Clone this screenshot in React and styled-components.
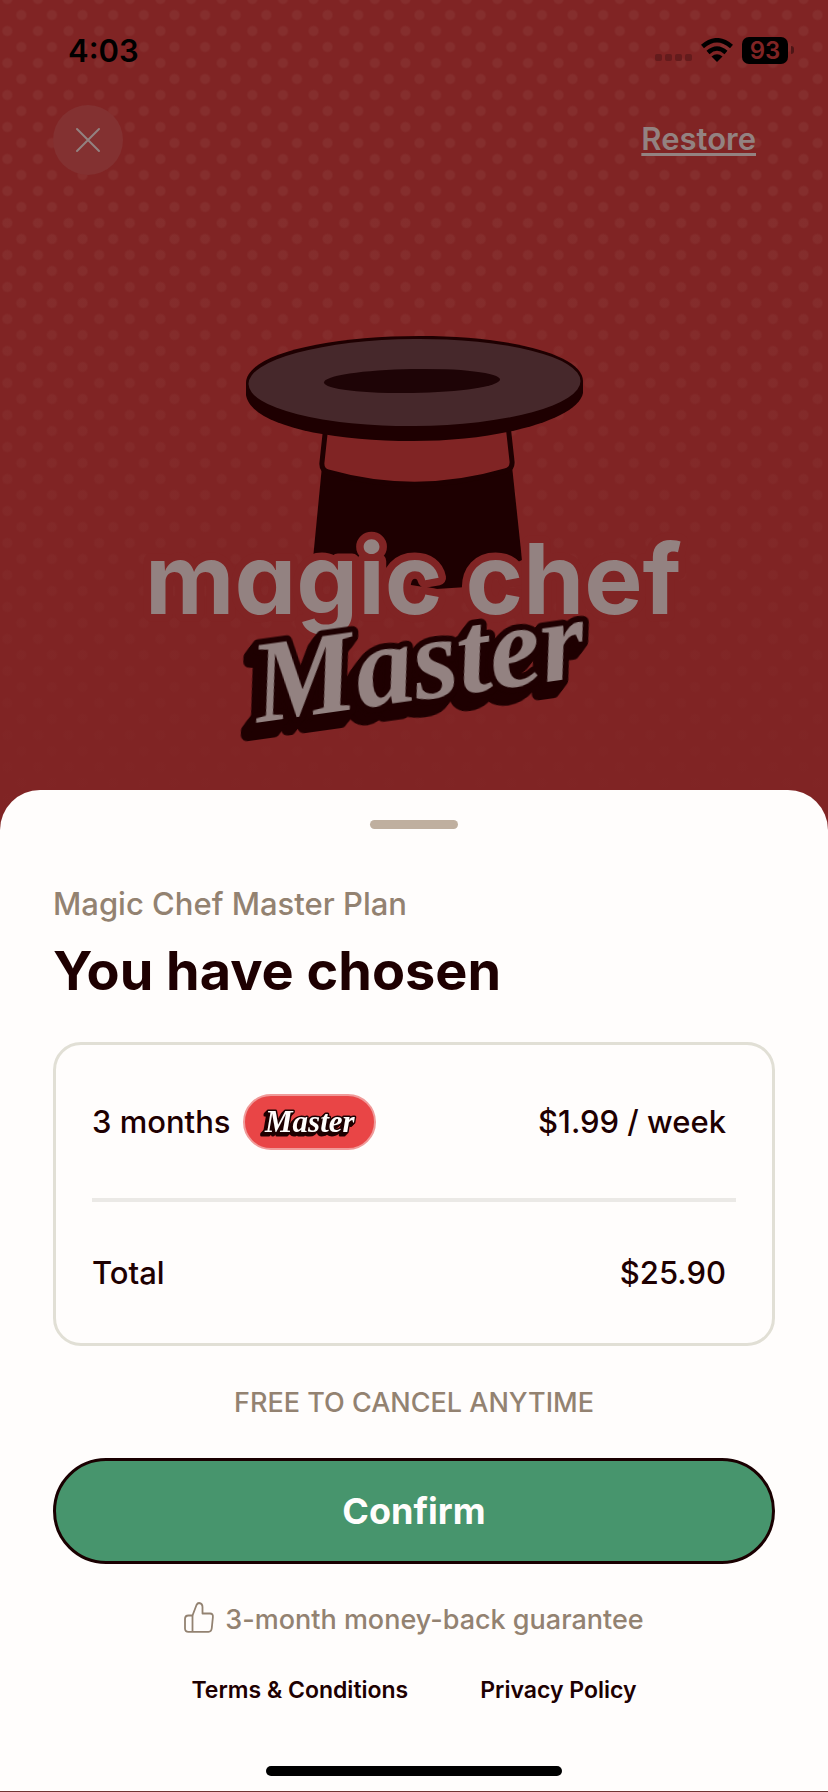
import styled, { createGlobalStyle } from "styled-components";

const GlobalStyle = createGlobalStyle`
  * {
    box-sizing: border-box;
  }

  body {
    margin: 0;
    font-family: "Inter", sans-serif;
    background: #802424;
  }
`;

const Screen = styled.div`
  min-height: 100vh;
  display: flex;
  flex-direction: column;
  background-color: #802424;
  /* halftone dots on two offset grids, fading out towards the sheet */
  background-image: linear-gradient(transparent 200px, #802424 820px),
    radial-gradient(circle, #852e2d 4px, transparent 6px),
    radial-gradient(circle, #852e2d 4px, transparent 6px);
  background-size: 100% 100%, 3.7% 32px, 3.7% 32px;
  background-position: 0 0, 6px -1px, -8px 15px;
`;

const StatusBar = styled.header`
  display: flex;
  justify-content: space-between;
  align-items: center;
  height: 100px;
  padding: 0 34px 0 68px;
`;

const Time = styled.span`
  font-size: 31px;
  font-weight: 600;
  color: #000;
`;

const StatusIcons = styled.div`
  display: flex;
  align-items: center;
  gap: 9px;
`;

const Signal = styled.div`
  display: flex;
  gap: 3px;
  padding-top: 14px;

  i {
    width: 7px;
    height: 7px;
    border-radius: 2px;
    background: #641b1c;
  }
`;

const Battery = styled.div`
  display: flex;
  align-items: center;
  gap: 3px;

  span {
    width: 46px;
    border-radius: 7px;
    background: #000;
    color: #802424;
    font-size: 24px;
    font-weight: 600;
    line-height: 27px;
    text-align: center;
  }

  i {
    width: 3px;
    height: 8px;
    border-radius: 0 3px 3px 0;
    background: #4e1516;
  }
`;

const TopNav = styled.nav`
  display: flex;
  justify-content: space-between;
  align-items: center;
  padding: 5px 72px 0 53px;
`;

const CloseButton = styled.button`
  display: grid;
  place-items: center;
  width: 70px;
  height: 70px;
  padding: 0;
  border: none;
  border-radius: 50%;
  background: #833131;
  cursor: pointer;
`;

const RestoreLink = styled.a`
  padding-bottom: 4px;
  color: #938281;
  font-size: 31px;
  font-weight: 600;
  text-decoration: underline;
  text-decoration-thickness: 3px;
  text-decoration-skip-ink: none;
  text-underline-offset: 3px;
`;

const Hero = styled.section`
  display: flex;
  justify-content: center;
  flex: 1;
  padding-top: 135px;

  svg {
    width: 560px;
    max-width: 100%;
    height: 440px;
  }
`;

const Sheet = styled.main`
  display: flex;
  flex-direction: column;
  align-items: center;
  padding: 30px 53px 15px;
  border-bottom: 1px solid #6f3433;
  border-radius: 40px 40px 0 0;
  background: #fffdfc;
  color: #1e0001;
`;

const Handle = styled.div`
  width: 88px;
  height: 9px;
  border-radius: 5px;
  background: #bfaf9f;
`;

const Heading = styled.div`
  width: 100%;
  padding-top: 56px;
`;

const PlanName = styled.p`
  margin: 0;
  font-size: 31px;
  font-weight: 500;
  line-height: 38px;
  color: #938271;
`;

const Title = styled.h1`
  margin: 12px 0 0;
  font-size: 54px;
  font-weight: 700;
  line-height: 72px;
`;

const Card = styled.section`
  width: 100%;
  margin-top: 35px;
  padding: 0 36px;
  border: 3px solid #e1dfd5;
  border-radius: 28px;
`;

const Row = styled.div`
  display: flex;
  justify-content: space-between;
  align-items: center;
  height: ${({ $height }) => $height}px;
  padding-right: 10px;
  font-size: 31px;
  font-weight: 500;

  & + & {
    border-top: 4px solid #ebe9e6;
  }
`;

const Term = styled.div`
  display: flex;
  align-items: center;
  gap: 12px;
`;

const Badge = styled.span`
  display: grid;
  place-items: center;
  width: 133px;
  height: 56px;
  border: 2px solid #f09a99;
  border-radius: 28px;
  background: #e94546;
`;

const Note = styled.p`
  margin: 41px 0 0;
  font-size: 27px;
  font-weight: 500;
  line-height: 32px;
  color: #938271;
`;

const ConfirmButton = styled.button`
  width: 100%;
  height: 106px;
  margin-top: 39px;
  border: 3px solid #1a0001;
  border-radius: 53px;
  background: #47956d;
  color: #fffdfc;
  font-family: inherit;
  font-size: 36px;
  font-weight: 700;
  cursor: pointer;
`;

const Guarantee = styled.p`
  display: flex;
  align-items: flex-start;
  gap: 11px;
  margin: 38px 0 0;
  font-size: 27px;
  font-weight: 500;
  line-height: 36px;
  color: #938271;
`;

const Links = styled.footer`
  display: flex;
  gap: 72px;
  margin-top: 38px;

  a {
    color: inherit;
    font-size: 23px;
    font-weight: 600;
    line-height: 28px;
    text-decoration: none;
  }
`;

const HomeIndicator = styled.div`
  width: 296px;
  height: 10px;
  margin-top: 62px;
  border-radius: 5px;
  background: #000;
`;

// Script lettering, its extrusion goes down and to the left
const ScriptText = styled.text`
  font-family: "Liberation Serif", serif;
  font-size: ${({ $size }) => $size}px;
  font-weight: 700;
  font-style: italic;
  paint-order: stroke;
  stroke: #1e0001;
  stroke-width: ${({ $outline }) => $outline}px;
  stroke-linejoin: round;
  filter: ${({ $steps }) => $steps.map((n) => `drop-shadow(-${n}px ${n}px 0 #1e0001)`).join(" ")};
`;

const WordmarkText = styled.text`
  font-family: "Inter", sans-serif;
  font-size: 98px;
  font-weight: 700;
  /* single-storey a */
  font-feature-settings: "cv11";
  fill: #938281;
  paint-order: stroke;
  stroke: #802424;
  stroke-width: 15px;
  stroke-linejoin: round;
`;

const Logo = () => (
  <svg viewBox="4 0 560 440" role="img" aria-label="magic chef Master">
    <path d="M192 156 L183 249 L250 270 L306 279 L337 277 L392 250 L382 156 Z" fill="#1e0001" />
    <path
      d="M196 115 L192 152 Q191 160 198 162 Q286 187 375 161 Q383 159 382 151 L378 115 Z"
      fill="#802424"
      stroke="#1e0001"
      strokeWidth="5"
    />
    <path d="M116 73 C116 45 194 26 290 26 C381 26 453 45 453 71 V83 C448 109 371 131 283 131 C191 131 120 113 116 85 Z" fill="#1e0001" />
    <ellipse cx="284.500" cy="72.500" rx="166" ry="43.500" transform="rotate(-0.500 284 72)" fill="#46282b" />
    <ellipse cx="282" cy="71" rx="88" ry="12" transform="rotate(-1 282 71)" fill="#1e0406" />
    <WordmarkText x="15" y="304">
      magic chef
    </WordmarkText>
    <g transform="rotate(-8 125 415)">
      <ScriptText x="128" y="413" $size={116} $outline={12} $steps={[1, 2, 4, 4]} fill="#938281">
        Master
      </ScriptText>
    </g>
  </svg>
);

const ThumbIcon = () => (
  <svg width="30" height="31" viewBox="0 0 30 31" fill="none" stroke="#938271" strokeWidth="1.800" strokeLinejoin="round" aria-hidden="true">
    <path d="M8.500 13.500 L12.500 3 Q13.500 1 15 1 Q18.500 1.500 18.500 5 V11.500 H26 Q29.200 11.500 28.900 15 L27.800 26 Q27.400 29.800 24.500 29.800 H4.500 Q1 29.800 1 26.500 V17 Q1 13.500 4.500 13.500 Z" />
    <path d="M8.500 13.500 V29.500" />
  </svg>
);

const App = () => {
  return (
    <>
      <GlobalStyle />
      <Screen>
        <StatusBar>
          <Time>4:03</Time>
          <StatusIcons>
            <Signal>
              <i />
              <i />
              <i />
              <i />
            </Signal>
            <svg width="32" height="24" viewBox="0 0 32 24" fill="none" stroke="#000" strokeWidth="4.500" aria-label="Wi-Fi">
              <path d="M1.500 8.500 Q16 -4 30.500 8.500" />
              <path d="M7 14.500 Q16 6.500 25 14.500" />
              <path d="M10.500 18.500 Q16 14 21.500 18.500 L16 24 Z" fill="#000" stroke="none" />
            </svg>
            <Battery>
              <span>93</span>
              <i />
            </Battery>
          </StatusIcons>
        </StatusBar>

        <TopNav>
          <CloseButton aria-label="Close">
            <svg width="26" height="26" viewBox="0 0 26 26" stroke="#938281" strokeWidth="2" strokeLinecap="round">
              <path d="M2 2 L24 24 M24 2 L2 24" />
            </svg>
          </CloseButton>
          <RestoreLink href="#restore">Restore</RestoreLink>
        </TopNav>

        <Hero>
          <Logo />
        </Hero>

        <Sheet>
          <Handle />
          <Heading>
            <PlanName>Magic Chef Master Plan</PlanName>
            <Title>You have chosen</Title>
          </Heading>

          {/* Order summary */}
          <Card>
            <Row $height={153}>
              <Term>
                3 months
                <Badge>
                  <svg width="100" height="36" viewBox="0 0 100 36" role="img" aria-label="Master">
                    <ScriptText x="6" y="28" $size={31} $outline={3} $steps={[1, 2]} fill="#fffdfc">
                      Master
                    </ScriptText>
                  </svg>
                </Badge>
              </Term>
              <span>$1.99 / week</span>
            </Row>
            <Row $height={145}>
              <span>Total</span>
              <span>$25.90</span>
            </Row>
          </Card>

          <Note>FREE TO CANCEL ANYTIME</Note>
          <ConfirmButton>Confirm</ConfirmButton>

          <Guarantee>
            <ThumbIcon />
            3-month money-back guarantee
          </Guarantee>

          <Links>
            <a href="#terms">Terms &amp; Conditions</a>
            <a href="#privacy">Privacy Policy</a>
          </Links>
          <HomeIndicator />
        </Sheet>
      </Screen>
    </>
  );
};

export default App;
